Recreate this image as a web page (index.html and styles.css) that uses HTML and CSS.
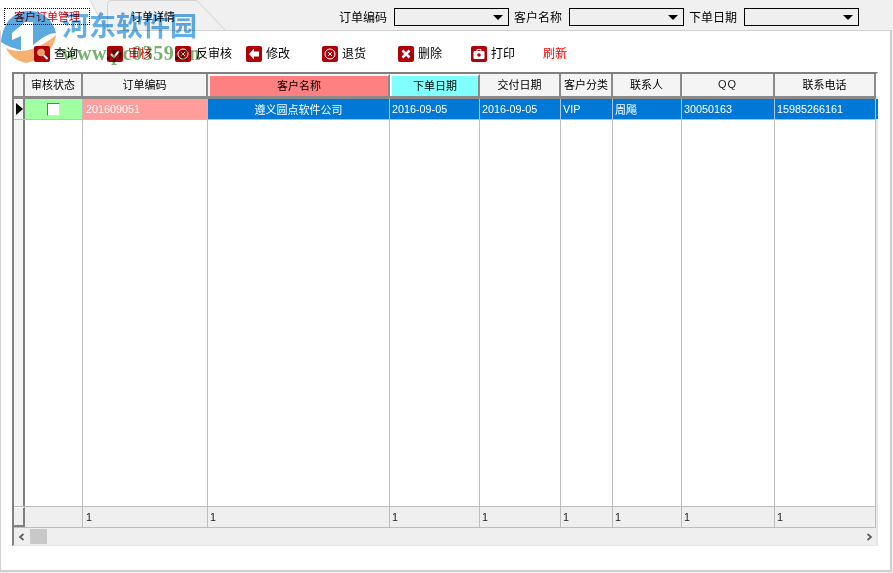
FILE: index.html
```html
<!DOCTYPE html>
<html lang="zh">
<head>
<meta charset="utf-8">
<title>客户订单管理</title>
<link rel="stylesheet" href="styles.css">
</head>
<body>
<div class="app">
  <header class="top">
    <div class="tabs">
      <div class="tab tab-active">
        <svg class="tab-bg" viewBox="0 0 107 31"><path d="M0 0H90L106 31H0Z" fill="#fff"/><path d="M90 0L106 30" fill="none" stroke="#d4d4d4"/></svg>
        <span class="tab-focus">客户订单管理</span>
      </div>
      <div class="tab tab-other">
        <svg class="tab-bg" viewBox="0 0 120 30"><path d="M.5 30V4Q.5 .5 4 .5H90L118 30" fill="#f0f0f0" stroke="#d4d4d4"/></svg>
        <span class="tab-text">订单详情</span>
      </div>
    </div>
    <div class="filters">
      <label class="f-label">订单编码</label>
      <div class="combo"><i class="caret"></i></div>
      <label class="f-label">客户名称</label>
      <div class="combo"><i class="caret"></i></div>
      <label class="f-label">下单日期</label>
      <div class="combo"><i class="caret"></i></div>
    </div>
  </header>

  <main class="panel">
    <div class="toolbar">
      <div class="tool t-query">
        <svg class="ico" viewBox="0 0 16 16"><rect width="16" height="16" rx="2" fill="#b00008"/><circle cx="7" cy="6.500" r="3.400" fill="#f4e4e4" stroke="#fff"/><path d="M9.500 9l4 4" stroke="#fff" stroke-width="2"/></svg>
        <span class="lbl">查询</span>
      </div>
      <div class="tool t-audit">
        <svg class="ico" viewBox="0 0 16 16"><rect width="16" height="16" rx="2" fill="#b00008"/><path d="M4 8l3 3 5-6" fill="none" stroke="#fff" stroke-width="2"/></svg>
        <span class="lbl red">审核</span>
      </div>
      <div class="tool t-unaudit">
        <svg class="ico" viewBox="0 0 16 16"><rect width="16" height="16" rx="2" fill="#b00008"/><circle cx="8" cy="8" r="5" fill="none" stroke="#fff"/><path d="M6 6l4 4M10 6l-4 4" stroke="#fff"/></svg>
        <span class="lbl">反审核</span>
      </div>
      <div class="tool t-edit">
        <svg class="ico" viewBox="0 0 16 16"><rect width="16" height="16" rx="2" fill="#b00008"/><path d="M8 2.500L3 8l5 5.500V10.500h5v-5H8z" fill="#fff"/></svg>
        <span class="lbl">修改</span>
      </div>
      <div class="tool t-return">
        <svg class="ico" viewBox="0 0 16 16"><rect width="16" height="16" rx="2" fill="#b00008"/><circle cx="8" cy="8" r="5" fill="none" stroke="#fff"/><path d="M6 6l4 4M10 6l-4 4" stroke="#fff"/></svg>
        <span class="lbl">退货</span>
      </div>
      <div class="tool t-del">
        <svg class="ico" viewBox="0 0 16 16"><rect width="16" height="16" rx="2" fill="#b00008"/><path d="M4.500 4.500l7 7M11.500 4.500l-7 7" stroke="#fff" stroke-width="2.600"/></svg>
        <span class="lbl">删除</span>
      </div>
      <div class="tool t-print">
        <svg class="ico" viewBox="0 0 16 16"><rect width="16" height="16" rx="2" fill="#b00008"/><path d="M6 5V3.500h4V5" fill="none" stroke="#fff"/><rect x="2.500" y="5" width="11" height="8" rx="1" fill="#fff"/><circle cx="8" cy="9" r="1.800" fill="#b00008"/></svg>
        <span class="lbl">打印</span>
      </div>
      <div class="tool t-refresh"><span class="lbl red">刷新</span></div>
    </div>

    <section class="grid">
      <div class="row head">
        <div class="c c-rh"></div>
        <div class="c c1">审核状态</div>
        <div class="c c2">订单编码</div>
        <div class="c c3 h-red">客户名称</div>
        <div class="c c4 h-cyan">下单日期</div>
        <div class="c c5">交付日期</div>
        <div class="c c6">客户分类</div>
        <div class="c c7">联系人</div>
        <div class="c c8">QQ</div>
        <div class="c c9">联系电话</div>
        <div class="c c10"></div>
      </div>
      <div class="row sel">
        <div class="c c-rh"><i class="arrow"></i></div>
        <div class="c c1 green"><i class="check"></i></div>
        <div class="c c2 pink">201609051</div>
        <div class="c c3 center">遵义圆点软件公司</div>
        <div class="c c4">2016-09-05</div>
        <div class="c c5">2016-09-05</div>
        <div class="c c6">VIP</div>
        <div class="c c7">周飚</div>
        <div class="c c8">30050163</div>
        <div class="c c9">15985266161</div>
        <div class="c c10"></div>
      </div>
      <div class="row empty">
        <div class="c c-rh"></div>
        <div class="c c1"></div>
        <div class="c c2"></div>
        <div class="c c3"></div>
        <div class="c c4"></div>
        <div class="c c5"></div>
        <div class="c c6"></div>
        <div class="c c7"></div>
        <div class="c c8"></div>
        <div class="c c9"></div>
        <div class="c c10"></div>
      </div>
      <div class="row foot">
        <div class="c c-rh"></div>
        <div class="c c1"></div>
        <div class="c c2">1</div>
        <div class="c c3">1</div>
        <div class="c c4">1</div>
        <div class="c c5">1</div>
        <div class="c c6">1</div>
        <div class="c c7">1</div>
        <div class="c c8">1</div>
        <div class="c c9">1</div>
        <div class="c c10"></div>
      </div>
      <div class="hscroll">
        <svg class="sb-arrow sb-left" viewBox="0 0 8 8"><path d="M5.500 1L2 4l3.500 3" fill="none" stroke="#606060" stroke-width="1.800"/></svg>
        <div class="thumb"></div>
        <div class="track"></div>
        <svg class="sb-arrow sb-right" viewBox="0 0 8 8"><path d="M2.500 1L6 4 2.500 7" fill="none" stroke="#606060" stroke-width="1.800"/></svg>
      </div>
    </section>
  </main>

  <div class="watermark">
    <svg class="wm-logo" viewBox="0 0 60 64">
      <path d="M1 42C3 22 14 11 29 11C43 11 53 20 56 33C45 34 40 40 33 45V22H25L12 33V40L21 36V50C12 48 5 45 1 42Z" fill="#5aa9e0"/>
      <path d="M6 48C18 54 36 52 56 35C54 50 42 60 26 63C16 61 9 55 6 48Z" fill="#f6b070"/>
    </svg>
    <span class="wm-cn">河东软件园</span>
    <span class="wm-url">www.pc0359.cn</span>
  </div>
</div>
</body>
</html>
```
FILE: styles.css
```css
* { box-sizing: border-box; }
html, body { margin: 0; padding: 0; }
body {
  width: 893px;
  height: 573px;
  overflow: hidden;
  background: #f0f0f0;
  font-family: "Noto Sans CJK SC", "Liberation Sans", sans-serif;
  font-size: 12px;
  color: #000;
}
.app { position: relative; width: 893px; height: 573px; }

.top { display: flex; height: 30px; }
.tabs { display: flex; width: 334px; }
.tab { position: relative; height: 30px; }
.tab-bg { position: absolute; left: 0; top: 0; width: 100%; height: 100%; }
.tab-active { width: 107px; height: 31px; padding: 8px 0 0 4px; }
.tab-focus {
  position: relative;
  display: block;
  width: 86px;
  height: 17px;
  border: 1px dotted #000;
  color: #e00010;
  font-size: 11px;
  line-height: 14px;
  text-align: center;
}
.tab-other { width: 120px; padding: 8px 0 0 24px; }
.tab-text { position: relative; display: block; font-size: 11px; line-height: 16px; }

.filters { display: flex; align-items: flex-start; padding-top: 8px; }
.f-label { width: 60px; padding-left: 5px; line-height: 17px; }
.combo {
  position: relative;
  width: 115px;
  height: 18px;
  border: 1px solid #000;
  background: #efefef;
}
.caret {
  position: absolute;
  right: 5px;
  top: 6px;
  border-left: 5px solid transparent;
  border-right: 5px solid transparent;
  border-top: 5px solid #000;
}

.panel {
  width: 892px;
  height: 542px;
  background: #fff;
  border: 1px solid #d0d0d0;
  border-right-width: 2px;
  border-bottom-width: 2px;
  padding: 0 0 0 11px;
}
.toolbar {
  display: flex;
  height: 41px;
  padding-top: 14px;
  align-items: flex-start;
}
.tool { display: flex; align-items: center; height: 17px; gap: 4px; line-height: 17px; }
.lbl { margin-top: -2px; }
.ico { width: 16px; height: 16px; flex: none; }
.red { color: #f00; }
.t-query { margin-left: 22px; width: 73px; }
.t-audit { width: 68px; gap: 5px; }
.t-unaudit { width: 71px; gap: 5px; }
.t-edit { width: 76px; }
.t-return { width: 76px; }
.t-del { width: 73px; }
.t-print { width: 72px; }
.t-refresh { width: 40px; }

.grid {
  width: 866px;
  height: 474px;
  display: flex;
  flex-direction: column;
  border-left: 2px solid #808080;
  border-top: 2px solid #808080;
  border-bottom: 1px solid #e6e6e6;
  border-right: 2px solid #e6e6e6;
  background: #fff;
}
.row { display: flex; flex: none; }
.c {
  flex: none;
  height: 100%;
  border-right: 1px solid #bdbdbd;
  padding-left: 2px;
  white-space: nowrap;
  overflow: hidden;
}
.c-rh { width: 11px; padding: 0; border-right: 2px solid #808080; background: #f5f5f5; position: relative; }
.c1 { width: 58px; }
.c2 { width: 125px; padding-left: 3px; }
.c3 { width: 182px; }
.c4 { width: 90px; }
.c5 { width: 81px; }
.c6 { width: 52px; }
.c7 { width: 69px; }
.c8 { width: 93px; }
.c9 { width: 101px; }
.c10 { width: 2px; padding: 0; border-right: 0; }

.head { height: 25px; border-bottom: 3px solid #8a8a8a; font-size: 11px; }
.head .c {
  background: #f4f4f4;
  text-align: center;
  padding: 0;
  line-height: 21px;
  border-right: 2px solid #8a8a8a;
}
.head .c8 { font-family: "Liberation Sans", sans-serif; font-size: 11px; letter-spacing: 1px; color: #222; }
.head .c10 { border-right: 0; background: #fff; }
.head .h-red, .head .h-cyan { border: 2px solid #f4f4f4; border-bottom: 0; line-height: 19px; border-right: 2px solid #8a8a8a; }
.head .h-red { background: #ff8080; }
.head .h-cyan { background: #80ffff; }

.sel { height: 21px; background: #0078d7; color: #fff; line-height: 20px; font-family: "Liberation Sans", "Noto Sans CJK SC", sans-serif; font-size: 10.800px; border-bottom: 1px solid #bdbdbd; }
.sel .c { border-right-color: #b0c4de; }
.sel .c3, .sel .c7 { font-family: "Noto Sans CJK SC", sans-serif; font-size: 11px; }
.sel .c-rh { background: #f5f5f5; border-right-color: #808080; display: flex; align-items: center; }
.sel .center { text-align: center; padding: 0; }
.sel .green { background: #a0ffa0; display: flex; align-items: center; justify-content: center; border-right-color: #bdbdbd; padding: 0; }
.sel .pink { background: #ff9c9c; border-right-color: #bdbdbd; }
.sel .c10 { background: #0078d7; }
.arrow {
  margin-left: 2px;
  border-top: 6px solid transparent;
  border-bottom: 6px solid transparent;
  border-left: 7px solid #000;
}
.check {
  width: 13px;
  height: 13px;
  background: #fff;
  border: 1px solid #707070;
  border-right-color: #ddd;
  border-bottom-color: #ddd;
}

.empty { flex: 1; min-height: 0; border-bottom: 1px solid #bdbdbd; }
.foot {
  height: 21px;
  background: #efefef;
  line-height: 21px;
  font-family: "Liberation Sans", sans-serif;
  font-size: 10.800px;
  color: #222;
  border-bottom: 1px solid #bdbdbd;
}
.foot .c-rh { background: #efefef; border-right: 2px solid #808080; border-bottom: 2px solid #808080; border-top: 1px solid #fff; }

.hscroll { display: flex; align-items: center; height: 17px; background: #efefef; flex: none; }
.sb-arrow { height: 8px; flex: none; }
.sb-left { width: 16px; }
.sb-right { width: 14px; }
.thumb { width: 17px; height: 15px; background: #c8c8c8; flex: none; }
.track { flex: 1; }

.watermark {
  position: absolute;
  left: 0;
  top: 0;
  width: 260px;
  height: 64px;
  pointer-events: none;
  mix-blend-mode: multiply;
}
.wm-logo { position: absolute; left: 0; top: 0; width: 60px; height: 64px; }
.wm-cn {
  position: absolute;
  left: 62px;
  top: 10px;
  font-family: "Noto Sans CJK SC", sans-serif;
  font-weight: 700;
  font-size: 27px;
  line-height: 30px;
  white-space: nowrap;
  color: #62b0e8;
}
.wm-url {
  position: absolute;
  left: 62px;
  top: 41px;
  font-family: "Liberation Serif", serif;
  font-weight: 700;
  font-size: 20px;
  line-height: 24px;
  letter-spacing: 0.500px;
  white-space: nowrap;
  color: #78b070;
}
```
